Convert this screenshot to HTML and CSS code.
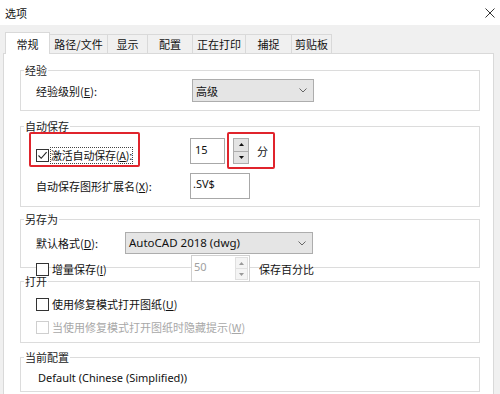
FILE: index.html
```html
<!DOCTYPE html>
<html lang="zh-CN">
<head>
<meta charset="utf-8">
<title>选项</title>
<link rel="stylesheet" href="styles.css">
</head>
<body>
<div class="titlebar">
  <span class="title">选项</span>
  <svg class="close" width="10" height="10" viewBox="0 0 10 10"><path d="M0.5 0.5L9.5 9.5M9.5 0.5L0.5 9.5" stroke="#333" stroke-width="1" fill="none"/></svg>
</div>
<div class="main">
  <div class="tabs">
    <div class="tab active">常规</div>
    <div class="tab">路径/文件</div>
    <div class="tab">显示</div>
    <div class="tab">配置</div>
    <div class="tab">正在打印</div>
    <div class="tab">捕捉</div>
    <div class="tab">剪贴板</div>
  </div>
  <div class="panel">
    <div class="group g-exp">
      <div class="legend">经验</div>
      <div class="row row-exp">
        <span class="lbl-exp">经验级别(<u>E</u>):</span>
        <div class="combo combo-exp"><span>高级</span><svg class="chev" width="8" height="5" viewBox="0 0 8 5"><path d="M0.5 0.5L4 4L7.5 0.5" stroke="#666" fill="none"/></svg></div>
      </div>
    </div>

    <div class="group g-auto">
      <div class="legend">自动保存</div>
      <div class="row row-auto">
        <div class="cblabel lbl-auto">
          <span class="cb"><svg width="11" height="11" viewBox="0 0 11 11"><path d="M1.5 5.5L4.2 8.3L9.6 2.2" stroke="#222" stroke-width="1.1" fill="none"/></svg></span>
          <span class="focus">激活自动保存(<u>A</u>):</span>
        </div>
        <div class="edit edit-min">15</div>
        <div class="spin">
          <span class="sbtn"><svg width="5" height="3" viewBox="0 0 5 3"><path d="M0 3L2.5 0L5 3Z" fill="#111"/></svg></span>
          <span class="sbtn"><svg width="5" height="3" viewBox="0 0 5 3"><path d="M0 0L2.5 3L5 0Z" fill="#111"/></svg></span>
        </div>
        <span class="unit">分</span>
        <span class="mark mark-a"></span>
        <span class="mark mark-b"></span>
      </div>
      <div class="row row-ext">
        <span class="lbl-auto">自动保存图形扩展名(<u>X</u>):</span>
        <div class="edit edit-ext">.SV$</div>
      </div>
    </div>

    <div class="group g-save">
      <div class="legend">另存为</div>
      <div class="row row-fmt">
        <span class="lbl-fmt">默认格式(<u>D</u>):</span>
        <div class="combo combo-fmt"><span class="latin">AutoCAD 2018 (dwg)</span><svg class="chev" width="8" height="5" viewBox="0 0 8 5"><path d="M0.5 0.5L4 4L7.5 0.5" stroke="#666" fill="none"/></svg></div>
      </div>
    </div>

    <div class="row row-incr">
      <div class="cblabel lbl-incr">
        <span class="cb"></span>
        <span>增量保存(<u>I</u>)</span>
      </div>
      <div class="edit edit-pct">
        <span class="dis latin">50</span>
        <div class="spin spin-dis">
          <span class="sbtn"><svg width="5" height="3" viewBox="0 0 5 3"><path d="M0 3L2.5 0L5 3Z" fill="#999"/></svg></span>
          <span class="sbtn"><svg width="5" height="3" viewBox="0 0 5 3"><path d="M0 0L2.5 3L5 0Z" fill="#999"/></svg></span>
        </div>
      </div>
      <span class="unit-pct">保存百分比</span>
    </div>

    <div class="group g-open">
      <div class="legend">打开</div>
      <div class="row row-cb">
        <div class="cblabel"><span class="cb"></span><span>使用修复模式打开图纸(<u>U</u>)</span></div>
      </div>
      <div class="row row-cb row-cb2">
        <div class="cblabel dis"><span class="cb cb-dis"></span><span>当使用修复模式打开图纸时隐藏提示(<u>W</u>)</span></div>
      </div>
    </div>

    <div class="group g-cur">
      <div class="legend">当前配置</div>
      <div class="row row-cur"><span class="latin">Default (Chinese (Simplified))</span></div>
    </div>
  </div>
</div>
</body>
</html>
```
FILE: styles.css
```css
* { box-sizing: border-box; }
body {
  margin: 0;
  width: 500px;
  height: 394px;
  overflow: hidden;
  background: #f0f0f0;
  font-family: "Noto Sans CJK SC", "Noto Sans", sans-serif;
  font-size: 11px;
  color: #111;
}
u { text-decoration: underline; text-underline-offset: 1px; }
.latin { font-family: "Noto Sans", "Noto Sans CJK SC", sans-serif; }

.titlebar {
  height: 25px;
  background: #fff;
  display: flex;
  align-items: center;
  justify-content: space-between;
  padding: 0 5px;
}
.title { line-height: 14px; }

.main { padding: 7px 6px 0 3px; height: 369px; }

.tabs {
  display: grid;
  grid-template-columns: 45px 58px 40px 45px 53px 46px 40px;
  grid-template-rows: 21px;
  align-items: end;
  margin-left: 2px;
}
.tab {
  height: 19px;
  border-top: 1px solid #d9d9d9;
  border-right: 1px solid #d9d9d9;
  background: #f0f0f0;
  display: flex;
  align-items: center;
  justify-content: center;
  line-height: 14px;
}
.tab.active {
  position: relative;
  z-index: 1;
  height: 22px;
  margin-bottom: -1px;
  background: #fff;
  border-left: 1px solid #d9d9d9;
}

.panel {
  background: #fff;
  border: 1px solid #d9d9d9;
  border-bottom: none;
  height: 341px;
  padding: 16px 13px 0 16px;
}

.group { border: 1px solid #dcdcdc; }
.legend {
  margin: -8px 0 0 3px;
  padding: 0 1px;
  width: max-content;
  height: 14px;
  line-height: 14px;
  background: #fff;
  color: #222;
}
.row {
  display: flex;
  align-items: center;
  padding-left: 15px;
  line-height: 16px;
}

/* group 1 */
.g-exp { padding-bottom: 8px; }
.row-exp { margin-top: 2px; }
.lbl-exp { width: 156px; }
.combo {
  display: flex;
  align-items: center;
  justify-content: space-between;
  background: #e5e5e5;
  border: 1px solid #adadad;
  padding: 0 6px 0 3px;
}
.combo-exp { width: 122px; height: 23px; }
.combo-fmt { width: 188px; height: 22px; padding-left: 3px; }
.combo-fmt .latin { font-size: 11.5px; }

/* group 2 */
.g-auto { margin-top: 15px; padding-bottom: 7px; }
.row-auto { margin-top: 5px; position: relative; height: 26px; }
.lbl-auto { width: 154px; }
.cblabel { display: flex; align-items: center; gap: 3px; }
.row-auto .cblabel { margin-top: 8px; gap: 1px; }
.cb {
  width: 13px;
  height: 13px;
  border: 1px solid #333;
  background: #fff;
  display: flex;
  align-items: center;
  justify-content: center;
  flex: none;
}
.cb-dis { border-color: #cfcfcf; }
.focus { border: 1px dotted #444; padding: 0; line-height: 15px; letter-spacing: -0.2px; }
.edit {
  border: 1px solid #a8a8a8;
  background: #fff;
  height: 26px;
  padding: 3px 0 0 4px;
  align-self: flex-start;
  font-family: "Noto Sans", "Noto Sans CJK SC", sans-serif;
}
.edit-min { width: 35px; }
.spin {
  margin-left: 8px;
  width: 16px;
  height: 26px;
  display: flex;
  flex-direction: column;
}
.sbtn {
  flex: 1;
  border: 1px solid #adadad;
  background: #e3e3e3;
  display: flex;
  align-items: center;
  justify-content: center;
}
.sbtn + .sbtn { border-top: none; }
.unit { margin-left: 8px; }
.mark {
  position: absolute;
  border: 2px solid #e0242c;
  border-radius: 2px;
  top: -6px;
}
.mark-a { left: 8px; width: 111px; height: 35px; }
.mark-b { left: 206px; width: 48px; height: 37px; }
.row-ext { margin-top: 9px; height: 26px; }
.edit-ext { width: 60px; padding: 2px 0 0 2px; }

/* group 3 */
.g-save { margin-top: 12px; padding-bottom: 13px; }
.row-fmt { margin-top: 6px; }
.lbl-fmt { width: 89px; }

/* increment row */
.row-incr { margin-top: -13px; height: 27px; padding-left: 16px; }
.lbl-incr { width: 155px; margin-top: 1px; }
.edit-pct {
  position: relative;
  z-index: 1;
  width: 59px;
  height: 27px;
  display: flex;
  justify-content: space-between;
  padding: 0 0 0 2px;
  border-color: #d0d0d0;
}
.edit-pct .dis { padding-top: 3px; color: #a0a0a0; }
.spin-dis { margin: 1px 1px 1px 0; width: 13px; height: auto; }
.spin-dis .sbtn { border-color: #e0e0e0; background: #f4f4f4; }
.unit-pct { margin-left: 9px; }

/* group 4 */
.g-open { margin-top: -1px; padding-bottom: 7px; }
.row-cb { margin-top: 8px; }
.row-cb2 { margin-top: 7px; }
.dis { color: #a8a8a8; }

/* group 5 */
.g-cur { margin-top: 14px; padding-bottom: 5px; }
.row-cur { margin-top: 6px; padding-left: 17px; }
```
